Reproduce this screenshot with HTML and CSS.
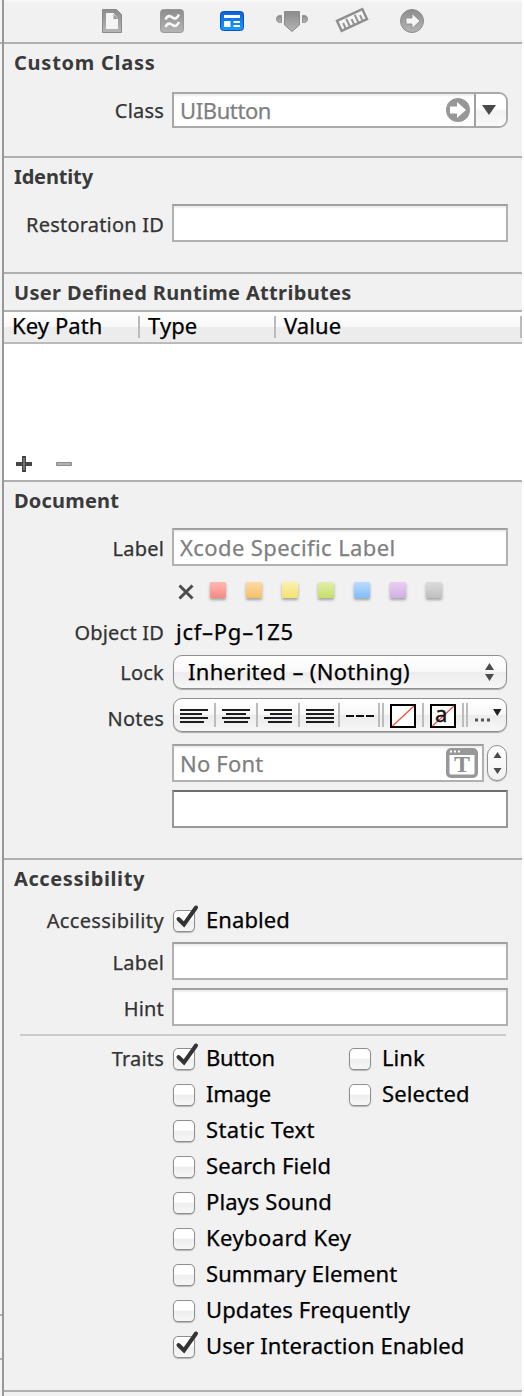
FILE: index.html
```html
<!DOCTYPE html>
<html lang="en">
<head>
<meta charset="utf-8">
<title>Identity Inspector</title>
<link rel="stylesheet" href="styles.css">
</head>
<body>
<svg class="defs" width="0" height="0">
  <defs>
    <linearGradient id="gray" x1="0" y1="0" x2="0" y2="1"><stop offset="0" stop-color="#8c8c8c"/><stop offset="1" stop-color="#b5b5b5"/></linearGradient>
    <linearGradient id="blue" x1="0" y1="0" x2="0" y2="1"><stop offset="0" stop-color="#0c62d6"/><stop offset="1" stop-color="#1a9cff"/></linearGradient>
    <symbol id="tick" viewBox="0 0 28 30"><path d="M5.500 15L11 20.500L23 3.500" fill="none" stroke="#333" stroke-width="4" stroke-linecap="round" stroke-linejoin="miter"/></symbol>
  </defs>
</svg>
<div class="window">
  <div class="gutter"><i class="gutter-top"></i><i class="gutter-a"></i><i class="gutter-b"></i></div>
  <main class="panel">
    <nav class="toolbar">
      <svg width="60" height="42" viewBox="0 0 60 42"><path d="M20.500 9.500H34.500L39.500 14.500V32.500H20.500Z" fill="url(#gray)" stroke="#8a8a8a"/><path d="M24 13H31.500L36 18.500V29H24Z" fill="#f4f4f4"/><path d="M31.500 14V19H36Z" fill="#999"/></svg>
      <svg width="60" height="42" viewBox="0 0 60 42"><rect x="18.500" y="9.500" width="23" height="23" rx="3" fill="url(#gray)" stroke="#999"/><path d="M23.500 19.500C25.500 15 28 15.500 30.500 17.500S35 18.500 37 14.500M23.500 27C25.500 22.500 28 23 30.500 25S35 26 37 22" fill="none" stroke="#f7f7f7" stroke-width="2.700"/></svg>
      <svg width="60" height="42" viewBox="0 0 60 42"><rect x="18.500" y="11.500" width="23" height="19" rx="3" fill="url(#blue)" stroke="#0755c2"/><path d="M22 15H38V18H22ZM22 21H28.500V27H22ZM31.500 21H38V23H31.500ZM31.500 25H38V27H31.500Z" fill="#fff"/></svg>
      <svg width="60" height="42" viewBox="0 0 60 42"><path d="M22.500 11.500H37.500V25L30 31.500L22.500 25Z" fill="url(#gray)" stroke="#8d8d8d"/><path d="M19.500 15.500H18C15.500 15.500 14.500 17 14.500 19S15.500 22.500 18 22.500H19.500ZM40.500 15.500H42C44.500 15.500 45.500 17 45.500 19S44.500 22.500 42 22.500H40.500Z" fill="url(#gray)" stroke="#939393"/></svg>
      <svg width="60" height="42" viewBox="0 0 60 42"><g transform="translate(30 20) rotate(-25)"><path d="M-14 -5.500H14V5.500H-14Z" fill="#f5f5f5" stroke="#8f8f8f" stroke-width="2.400"/><path d="M-9.300 5V-1M-4.700 5V-3.500M0 5V-1M4.700 5V-3.500M9.300 5V-1" stroke="#939393" stroke-width="2"/></g></svg>
      <svg width="60" height="42" viewBox="0 0 60 42"><circle cx="30" cy="21" r="11.500" fill="url(#gray)" stroke="#8c8c8c"/><path d="M24 18H30V13.500L38 21L30 28.500V24H24Z" fill="#f5f5f5" stroke="#8a8a8a" stroke-width=".8"/></svg>
    </nav>

    <section class="custom">
      <h2>Custom Class</h2>
      <div class="row"><label>Class</label>
        <div class="combo"><span class="placeholder">UIButton</span>
          <svg class="jump" width="24" height="24" viewBox="0 0 24 24"><circle cx="12" cy="12" r="12" fill="#979797"/><path d="M4 8.500H11V4L20 12L11 20V15.500H4Z" fill="#fff"/></svg>
          <span class="drop"><svg width="14" height="10" viewBox="0 0 14 10"><path d="M0 0H14L7 10Z" fill="#4a4a4a"/></svg></span>
        </div>
      </div>
    </section>

    <section class="identity">
      <h2>Identity</h2>
      <div class="row tall"><label>Restoration ID</label><div class="field"></div></div>
    </section>

    <section class="runtime">
      <h2>User Defined Runtime Attributes</h2>
      <div class="thead"><span>Key Path</span><span>Type</span><span>Value</span></div>
      <div class="tbody">
        <svg width="60" height="16" viewBox="0 0 60 16"><path d="M6 0H10V6H16V10H10V16H6V10H0V6H6Z" fill="#454545"/><path d="M7 2H9V14H7Z" fill="#707070"/><path d="M40.500 6.500H55.500V9.500H40.500Z" fill="#b0b0b0" stroke="#8c8c8c"/></svg>
      </div>
    </section>

    <section class="document">
      <h2>Document</h2>
      <div class="row tall"><label>Label</label><div class="field placeholder label-field">Xcode Specific Label</div></div>
      <div class="swatches">
        <svg width="16" height="16" viewBox="0 0 16 16"><path d="M1.500 1.500L14.500 14.500M14.500 1.500L1.500 14.500" stroke="#4c4c4c" stroke-width="3"/></svg>
        <i class="red"></i><i class="orange"></i><i class="yellow"></i><i class="green"></i><i class="sky"></i><i class="purple"></i><i class="silver"></i>
      </div>
      <div class="row object"><label>Object ID</label><span class="value">jcf–Pg–1Z5</span></div>
      <div class="row lock"><label>Lock</label>
        <div class="popup"><span>Inherited – (Nothing)</span><svg width="9" height="18" viewBox="0 0 9 18"><path d="M0 7L4.500 0L9 7ZM0 11H9L4.500 18Z" fill="#4b4b4b"/></svg></div>
      </div>
      <div class="row notes"><label>Notes</label>
        <div class="format">
          <svg width="332" height="32" viewBox="0 0 332 32">
            <path d="M41 4V28M83 4V28M125 4V28M165 4V28M205 4V28M209 4V28M249 4V28M289 4V28M293 4V28" stroke="#bdbdbd" stroke-width="2"/>
            <path d="M6 11H34M6 15H28M6 19H34M6 23H30M48 11H76M52 15H72M48 19H76M50 23H74M90 11H118M96 15H118M90 19H118M94 23H118M132 11H160M132 15H160M132 19H160M132 23H160" stroke="#1d1d20" stroke-width="2.200"/>
            <path d="M172 17H180M182 17H190M192 17H200" stroke="#111" stroke-width="2.200"/>
            <path d="M217 6H241V28H217Z" fill="#fff" stroke="#000" stroke-width="2"/>
            <path d="M218.500 27L240 7" stroke="#f54c3c" stroke-width="1.200"/>
            <path d="M257 6H281V28H257Z" fill="#fff" stroke="#000" stroke-width="2"/>
            <path d="M258.500 27L280 7" stroke="#f54c3c" stroke-width="1.200"/>
            <text x="261" y="23" class="glyph-a">a</text>
            <path d="M301 19.500H304V22.500H301ZM307 19.500H310V22.500H307ZM313 19.500H316V22.500H313Z" fill="#555"/>
            <path d="M319 10H327.500L323.300 17Z" fill="#222"/>
          </svg>
        </div>
      </div>
      <div class="row font"><label></label>
        <div class="field placeholder">No Font
          <svg class="fonticon" width="32" height="30" viewBox="0 0 32 30"><rect width="32" height="30" rx="5" fill="#989898"/><path d="M3.500 7H28.500V25Q28.500 26.500 27 26.500H5Q3.500 26.500 3.500 25ZM4 2.500H6V4.500H4ZM8 2.500H10V4.500H8ZM12 2.500H14V4.500H12Z" fill="#fff"/><text x="16" y="24" class="glyph-t">T</text></svg>
        </div>
        <div class="stepper"><svg width="9" height="22" viewBox="0 0 9 22"><path d="M.5 6L4.500 0L8.500 6ZM.5 16H8.500L4.500 22Z" fill="#4b4b4b"/></svg></div>
      </div>
      <div class="row area"><label></label><div class="textarea"></div></div>
    </section>

    <section class="access">
      <h2>Accessibility</h2>
      <div class="row enabled"><label>Accessibility</label><div class="check"><b><svg><use href="#tick"/></svg></b><span>Enabled</span></div></div>
      <div class="row tall alabel"><label>Label</label><div class="field"></div></div>
      <div class="row tall hint"><label>Hint</label><div class="field"></div></div>
      <hr>
      <div class="row traits"><label>Traits</label>
        <div class="grid">
          <div class="check"><b><svg><use href="#tick"/></svg></b><span class="snug">Button</span></div>
          <div class="check"><b></b><span>Link</span></div>
          <div class="check"><b></b><span class="snug">Image</span></div>
          <div class="check"><b></b><span>Selected</span></div>
          <div class="check wide"><b></b><span class="loose">Static Text</span></div>
          <div class="check wide"><b></b><span>Search Field</span></div>
          <div class="check wide"><b></b><span>Plays Sound</span></div>
          <div class="check wide"><b></b><span class="loose">Keyboard Key</span></div>
          <div class="check wide"><b></b><span>Summary Element</span></div>
          <div class="check wide"><b></b><span>Updates Frequently</span></div>
          <div class="check wide"><b><svg><use href="#tick"/></svg></b><span>User Interaction Enabled</span></div>
        </div>
      </div>
    </section>
  </main>
</div>
</body>
</html>
```
FILE: styles.css
```css
* { box-sizing: border-box; }
body { margin: 0; background: #fff; font-family: "Noto Sans", "Open Sans", sans-serif; font-size: 22px; color: #000; -webkit-text-stroke: .25px; }
.defs { position: absolute; }
.window { display: flex; width: 522px; height: 1396px; background: #f1f1f1; overflow: hidden; }
.gutter { width: 2px; display: flex; flex-direction: column; background: #f4f4f4; }
.gutter i { height: 2px; background: #b0b0b0; }
.gutter-top { margin-top: 42px; }
.gutter-a { margin-top: 1270px; }
.gutter-b { margin-top: 42px; }
.panel { width: 520px; border-left: 2px solid #989898; }
.toolbar { height: 44px; padding-left: 78px; display: flex; border-top: 2px solid #f7f7f7; border-bottom: 2px solid #b0b0b0; }
.toolbar svg { margin-top: -2px; flex: none; }
section { border-bottom: 2px solid #b0b0b0; }
.custom { height: 114px; }
.identity { height: 116px; }
.runtime { height: 208px; }
.document { height: 378px; }
.access { height: 532px; }
h2 { margin: 0; height: 36px; padding-left: 10px; line-height: 38px; font-size: 20px; font-weight: 700; color: #3a3a3a; letter-spacing: .2px; white-space: nowrap; -webkit-text-stroke: 0; }
.custom h2 { letter-spacing: .75px; }
.identity h2 { letter-spacing: -.15px; }
.runtime h2 { letter-spacing: .34px; }
.access h2 { letter-spacing: .6px; }
.row { display: flex; gap: 8px; height: 36px; align-items: center; white-space: nowrap; }
.row label { width: 160px; flex: none; padding-top: 2px; text-align: right; font-size: 20px; line-height: 28px; color: #333; letter-spacing: .2px; }
.tall { height: 38px; margin-top: 10px; }
.tall label { padding-top: 4px; }
.field { width: 336px; height: 38px; padding-left: 6px; line-height: 34px; background: #fff; border: 2px solid #b1b1b1; border-top-color: #a0a0a0; box-shadow: inset 0 2px 2px #eee; }
.placeholder { color: #808080; }

.custom .row { margin-top: 12px; }
.combo { width: 336px; height: 36px; display: flex; align-items: center; padding-left: 6px; border: 2px solid #a9a9a9; border-radius: 0 9px 9px 0; background: #fff; box-shadow: inset 0 2px 2px #eee; overflow: hidden; }
.combo .placeholder { padding-bottom: 1px; letter-spacing: -.4px; }
.jump { margin-left: auto; margin-right: 4px; }
.drop { width: 32px; height: 32px; border-left: 2px solid #a0a0a0; display: flex; align-items: center; padding-left: 6px; background: linear-gradient(#fff 0 45%, #f1f1f1 55%, #fafafa); }

.thead { height: 34px; display: flex; border-top: 2px solid #b0b0b0; border-bottom: 2px solid #bababa; background: linear-gradient(#fff 0, #f9f9f9 48%, #ececec 52%, #ededed); line-height: 27px; letter-spacing: .1px; }
.thead span { height: 30px; padding-left: 8px; background: linear-gradient(#bbb, #bbb) right 4px / 2px 22px no-repeat; background-position: right 4px; }
.thead span:nth-child(1) { width: 136px; }
.thead span:nth-child(2) { width: 136px; }
.thead span:nth-child(3) { width: 246px; }
.tbody { height: 136px; background: #fff; padding: 112px 0 0 12px; }
.tbody svg { display: block; }

.label-field { letter-spacing: .4px; }
.swatches { display: flex; gap: 20px; height: 20px; margin-top: 14px; padding: 2px 0 0 174px; }
.swatches svg { margin: 2px -4px 0 0; }
.swatches i { width: 16px; height: 16px; border-radius: 1px; box-shadow: 0 2px 3px rgba(0,0,0,.33); }
.red { background: linear-gradient(#ffb8b3, #fb8982); }
.orange { background: linear-gradient(#fcdba4, #f6bf66); }
.yellow { background: linear-gradient(#faf1ae, #f4e271); }
.green { background: linear-gradient(#e0f0a8, #c7dd68); }
.sky { background: linear-gradient(#bbdcff, #82bcff); }
.purple { background: linear-gradient(#e7cff1, #d2aee6); }
.silver { background: linear-gradient(#dcdcdc, #bfbfbf); }
.object { height: 28px; margin-top: 18px; }
.object .value { padding: 0 0 2px 4px; letter-spacing: .75px; }
.lock { margin-top: 8px; }
.popup, .format { width: 334px; margin-left: 1px; border: 1.500px solid #8f8f8f; border-radius: 9px; background: linear-gradient(#fff 0, #f8f8f8 48%, #ececec 52%, #f7f7f7); box-shadow: 0 1px 1px rgba(0,0,0,.3); }
.popup { height: 34px; display: flex; align-items: center; justify-content: space-between; padding: 0 12px 0 14px; }
.popup span { padding-bottom: 2px; letter-spacing: .3px; }
.notes { height: 34px; margin-top: 8px; }
.notes label { padding-top: 8px; }
.format { height: 34px; }
.format svg { display: block; }
.glyph-a { font-size: 22px; fill: #111; stroke: #111; stroke-width: .4px; }
.glyph-t { font: 700 24px "Liberation Serif", serif; fill: #8d8d8d; text-anchor: middle; }
.font { height: 38px; margin-top: 12px; }
.font .field { width: 312px; display: flex; align-items: center; justify-content: space-between; padding-right: 4px; letter-spacing: .2px; }
.stepper { width: 20px; height: 36px; margin-left: -5px; display: flex; align-items: center; justify-content: center; border: 1.500px solid #8f8f8f; border-radius: 10px; background: linear-gradient(#fff, #f2f2f2); box-shadow: 0 1px 1px rgba(0,0,0,.25); }
.area { height: 38px; margin-top: 8px; }
.textarea { width: 336px; height: 38px; background: #fff; border: 2px solid #989898; border-top-color: #6e6e6e; }

.enabled { margin-top: 6px; }
.enabled label { letter-spacing: .35px; }
.alabel { margin-top: 4px; }
.hint { margin-top: 8px; }
hr { height: 2px; margin: 8px 16px 4px; border: 0; background: #cbcbcb; }
.traits { height: auto; align-items: flex-start; }
.traits label { padding-top: 1px; line-height: 36px; }
.grid { display: grid; grid-template-columns: 176px 160px; grid-auto-rows: 36px; }
.wide { grid-column: 1 / 3; }
.check { display: flex; align-items: center; height: 36px; gap: 11px; padding-left: 1px; line-height: 34px; letter-spacing: .08px; }
.check span { height: 36px; }
.loose { letter-spacing: .4px; }
.snug { letter-spacing: -.3px; }
.check b { width: 22px; height: 22px; margin-top: 2px; border: 1.500px solid #8e8e8e; border-radius: 5px; background: linear-gradient(#fff 0 45%, #eee 52%, #f7f7f7); box-shadow: 0 1px 1px rgba(0,0,0,.25); }
.check b svg { display: block; width: 28px; height: 30px; margin: -7px 0 0 -1px; overflow: visible; }
```
